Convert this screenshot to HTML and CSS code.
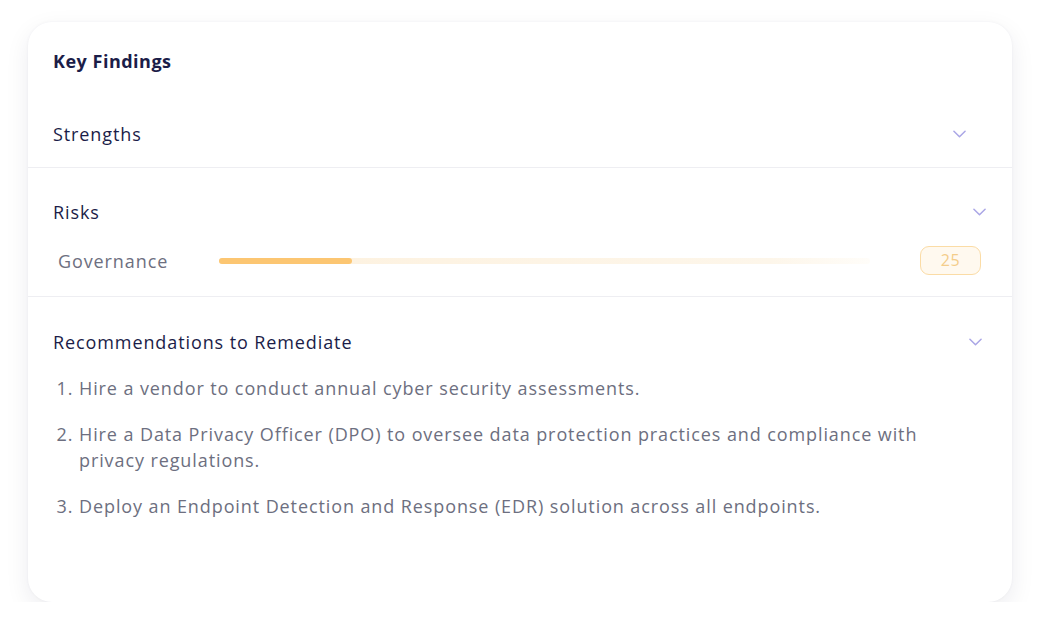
FILE: index.html
```html
<!DOCTYPE html>
<html lang="en">

<head>
    <link rel="stylesheet" href="styles.css">
</head>

<body>

    <div class="card">
        <h2 class="card-title">Key Findings</h2>

        <div class="section strengths">
            <div class="section-head">
                <span>Strengths</span>
                <svg class="chev" viewBox="0 0 14 8"><path d="M1 1l6 6 6-6"/></svg>
            </div>
        </div>

        <div class="section risks">
            <div class="section-head">
                <span>Risks</span>
                <svg class="chev" viewBox="0 0 14 8"><path d="M1 1l6 6 6-6"/></svg>
            </div>
            <div class="risk-row">
                <span class="risk-name">Governance</span>
                <div class="track"><div class="fill" style="width: 20.5%"></div></div>
                <span class="score">25</span>
            </div>
        </div>

        <div class="section recs">
            <div class="section-head">
                <span>Recommendations to Remediate</span>
                <svg class="chev" viewBox="0 0 14 8"><path d="M1 1l6 6 6-6"/></svg>
            </div>
            <ol class="rec-list">
                <li>Hire a vendor to conduct annual cyber security assessments.</li>
                <li>Hire a Data Privacy Officer (DPO) to oversee data protection practices and compliance with privacy regulations.</li>
                <li>Deploy an Endpoint Detection and Response (EDR) solution across all endpoints.</li>
            </ol>
        </div>
    </div>

</body>

</html>
```

FILE: styles.css
```css
body{
    margin: 0;
    background-color: #ffffff;
    font-family: "Open Sans", "Noto Sans", sans-serif;
    letter-spacing: 0.9px;
}

.card{
    margin: 22px 0 0 28px;
    width: 984px;
    height: 580px;
    box-sizing: border-box;
    background-color: #fff;
    border-radius: 24px;
    box-shadow: 0 8px 24px rgba(30, 30, 70, 0.08), 0 0 3px rgba(30, 30, 70, 0.05);
}

.card-title{
    margin: 0;
    padding: 27px 25px 0;
    font-size: 18px;
    line-height: 24px;
    font-weight: 700;
    letter-spacing: 0.5px;
    color: #1b1d48;
}

.section{
    padding: 32px 26px 21px 25px;
    border-bottom: 1px solid #eeeef2;
}

.strengths{
    padding-top: 49px;
    padding-right: 46px;
}

.recs{
    padding-top: 33px;
    padding-right: 30px;
    border-bottom: none;
}

.section-head{
    display: flex;
    align-items: center;
    justify-content: space-between;
    height: 24px;
    font-size: 18px;
    color: #1b1d48;
}

.chev{
    width: 13px;
    height: 8px;
    fill: none;
    stroke: #aaa6e6;
    stroke-width: 1.6;
    stroke-linecap: round;
    stroke-linejoin: round;
}

.risk-row{
    display: flex;
    align-items: center;
    margin-top: 22px;
    padding-left: 5px;
    height: 29px;
}

.risk-name{
    width: 161px;
    font-size: 18px;
    color: #6d6f80;
}

.track{
    width: 651px;
    height: 6px;
    border-radius: 3px;
    background: linear-gradient(to right, #fdf1de, #fdf6ea 85%, #fffdf9);
}

.fill{
    height: 100%;
    border-radius: 3px;
    background-color: #fcc672;
}

.score{
    margin-left: 50px;
    width: 61px;
    height: 29px;
    box-sizing: border-box;
    border: 1px solid #fbdca6;
    border-radius: 9px;
    background-color: #fff9ef;
    color: #f4cd8a;
    font-size: 16px;
    letter-spacing: 0.5px;
    text-align: center;
    line-height: 27px;
}

.rec-list{
    margin: 21px 0 0;
    padding: 0 50px 0 26px;
    font-size: 18px;
    line-height: 26px;
    color: #6d6f80;
}

.rec-list li{
    margin-bottom: 20px;
}
```
